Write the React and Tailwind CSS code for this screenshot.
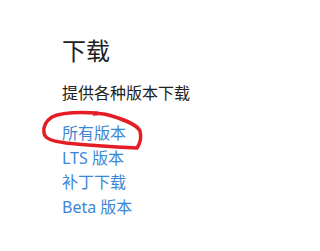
export default function App() {
  const links = ['所有版本', 'LTS 版本', '补丁下载', 'Beta 版本'];
  return (
    <div
      className="relative w-[224px] h-[251px] bg-white pl-[62px] pt-[35px]"
      style={{ fontFamily: '"Noto Sans", "Noto Sans CJK SC", sans-serif' }}
    >
      <h1 className="text-[24px] leading-[32px] text-[#222]">下载</h1>
      <p className="mt-[14px] text-[16px] leading-[24px] text-[#222]">提供各种版本下载</p>
      <ul className="mt-[16px] flex flex-col">
        {links.map((l) => (
          <li key={l}>
            <a className="text-[16px] leading-[23.7px] text-[#3a87d6]" href="#">
              {l}
            </a>
          </li>
        ))}
      </ul>

      {/* hand-drawn red circle annotation */}
      <svg className="absolute left-0 top-0 pointer-events-none" width="224" height="251">
        <path
          d="M97 113 C80 112 62 112 52 117 C46 121 43 127 44 133 C45 139 52 141 66 143 C85 145 115 147 137 148 C141 142 141 135 140 131 C137 125 128 121 112 116 C104 113 98 113 94 114"
          fill="none"
          stroke="#e51c23"
          strokeWidth="3.5"
          strokeLinecap="round"
        />
      </svg>
    </div>
  );
}
